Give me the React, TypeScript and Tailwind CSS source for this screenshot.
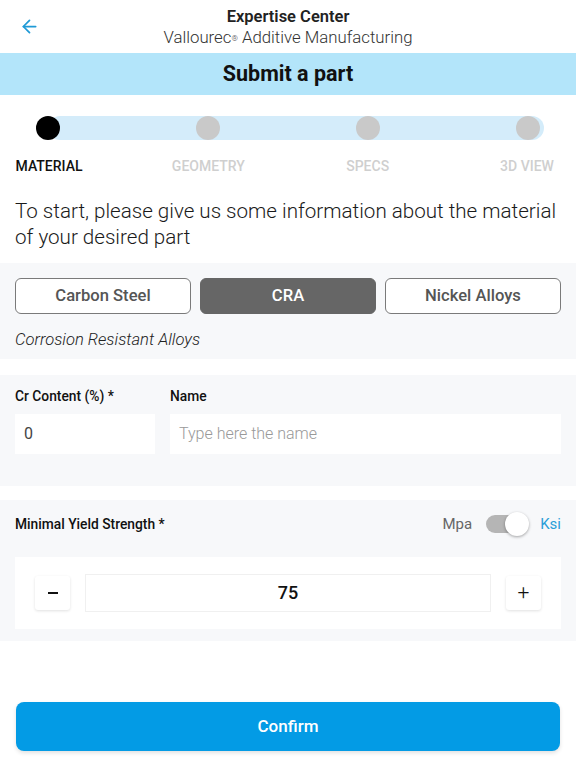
import { ArrowLeft } from "lucide-react";

const steps = ["Material", "Geometry", "Specs", "3D View"];
const materials = ["Carbon Steel", "CRA", "Nickel Alloys"];

function Stepper({ active }: { active: number }) {
  return (
    <div className="px-[16px] pt-[21px] pb-[14px]">
      <div className="relative mx-[20px] h-[24px]">
        <div className="absolute inset-y-0 left-[12px] right-[-4px] rounded-full bg-[#d4ecfa]" />
        <div className="relative flex h-full items-center justify-between">
          {steps.map((s, i) => (
            <div
              key={s}
              className={`h-[24px] w-[24px] rounded-full ${
                i === active ? "bg-black" : "bg-[#c9c9c9]"
              }`}
            />
          ))}
        </div>
      </div>
      <div className="mt-[16px] flex justify-between">
        {steps.map((s, i) => (
          <div key={s} className="flex w-[66px] justify-center">
            <span
              className={`whitespace-nowrap text-[14px] font-medium uppercase ${
                i === active ? "text-[#111]" : "text-[#cfcfcf]"
              }`}
            >
              {s}
            </span>
          </div>
        ))}
      </div>
    </div>
  );
}

export default function App() {
  return (
    <div className="flex min-h-[768px] w-[576px] flex-col bg-white font-['Roboto',sans-serif] text-[#111]">
      <header className="relative flex h-[53px] flex-col items-center justify-center">
        <ArrowLeft
          className="absolute left-[19px] top-[16px] h-[21px] w-[21px] text-[#1f9ad6]"
          strokeWidth={2}
        />
        <h1 className="text-[16.5px] font-semibold leading-[20px] text-[#222]">
          Expertise Center
        </h1>
        <p className="text-[16.8px] font-light leading-[20px] text-[#333]">
          Vallourec<sup className="relative -top-[2px] text-[8px]">®</sup>{" "}
          Additive Manufacturing
        </p>
      </header>

      <div className="flex h-[42px] items-center justify-center bg-[#b3e5fa]">
        <h2 className="text-[21.5px] font-bold text-[#111]">Submit a part</h2>
      </div>

      <Stepper active={0} />

      <p className="px-[15px] pt-[7px] pb-[13px] text-[20.6px] font-light leading-[26px] text-[#1a1a1a]">
        To start, please give us some information about the material of your
        desired part
      </p>

      <section className="bg-[#f7f8fa] px-[15px] pt-[15px] pb-[7px]">
        <div className="grid grid-cols-3 gap-[9px]">
          {materials.map((m) => (
            <button
              key={m}
              className={`h-[36px] rounded-[6px] border text-[16.6px] font-medium ${
                m === "CRA"
                  ? "border-[#666] bg-[#666] text-white"
                  : "border-[#7a7a7a] bg-white text-[#555]"
              }`}
            >
              {m}
            </button>
          ))}
        </div>
        <p className="mt-[14px] text-[16.6px] font-light italic leading-[24px] text-[#222]">
          Corrosion Resistant Alloys
        </p>
      </section>

      <section className="mt-[16px] bg-[#f7f8fa] px-[15px] pt-[9px] pb-[32px]">
        <div className="flex gap-[15px]">
          <div className="w-[140px]">
            <label className="text-[13.8px] font-medium text-[#111]">
              Cr Content (%) *
            </label>
            <div className="mt-[6px] flex h-[40px] items-center bg-white px-[9px] text-[16px] text-[#444]">
              0
            </div>
          </div>
          <div className="flex-1">
            <label className="text-[13.8px] font-medium text-[#111]">Name</label>
            <div className="mt-[6px] flex h-[40px] items-center bg-white px-[9px] text-[16px] font-light text-[#999]">
              Type here the name
            </div>
          </div>
        </div>
      </section>

      <section className="mt-[14px] bg-[#f7f8fa] px-[15px] pt-[13px] pb-[12px]">
        <div className="flex items-center justify-between">
          <span className="text-[13.8px] font-medium text-[#111]">
            Minimal Yield Strength *
          </span>
          <div className="flex items-center gap-[14px]">
            <span className="text-[15px] text-[#666]">Mpa</span>
            <div className="relative h-[18px] w-[40px] rounded-full bg-[#b5b5b5]">
              <div className="absolute right-[-3px] top-[-3px] h-[24px] w-[24px] rounded-full bg-white shadow-[0_1px_3px_rgba(0,0,0,0.35)]" />
            </div>
            <span className="text-[15px] text-[#2a9fd8]">Ksi</span>
          </div>
        </div>
        <div className="mt-[21px] flex items-center gap-[15px] bg-white px-[20px] py-[17px]">
          <button className="flex h-[34px] w-[35px] items-center justify-center rounded-[3px] bg-white shadow-[0_1px_3px_rgba(0,0,0,0.12)]">
            <span className="block h-[2px] w-[10px] bg-[#111]" />
          </button>
          <div className="flex h-[38px] flex-1 items-center justify-center border border-[#f0f0f0] text-[18px] font-medium text-[#111]">
            75
          </div>
          <button className="flex h-[34px] w-[35px] items-center justify-center rounded-[3px] bg-white text-[21px] font-light text-[#111] shadow-[0_1px_3px_rgba(0,0,0,0.12)]">
            +
          </button>
        </div>
      </section>

      <div className="mt-auto px-[16px] pb-[17px]">
        <button className="h-[49px] w-full rounded-[8px] bg-[#039be5] text-[17px] font-medium text-white shadow-[0_2px_4px_rgba(0,0,0,0.12)]">
          Confirm
        </button>
      </div>
    </div>
  );
}
